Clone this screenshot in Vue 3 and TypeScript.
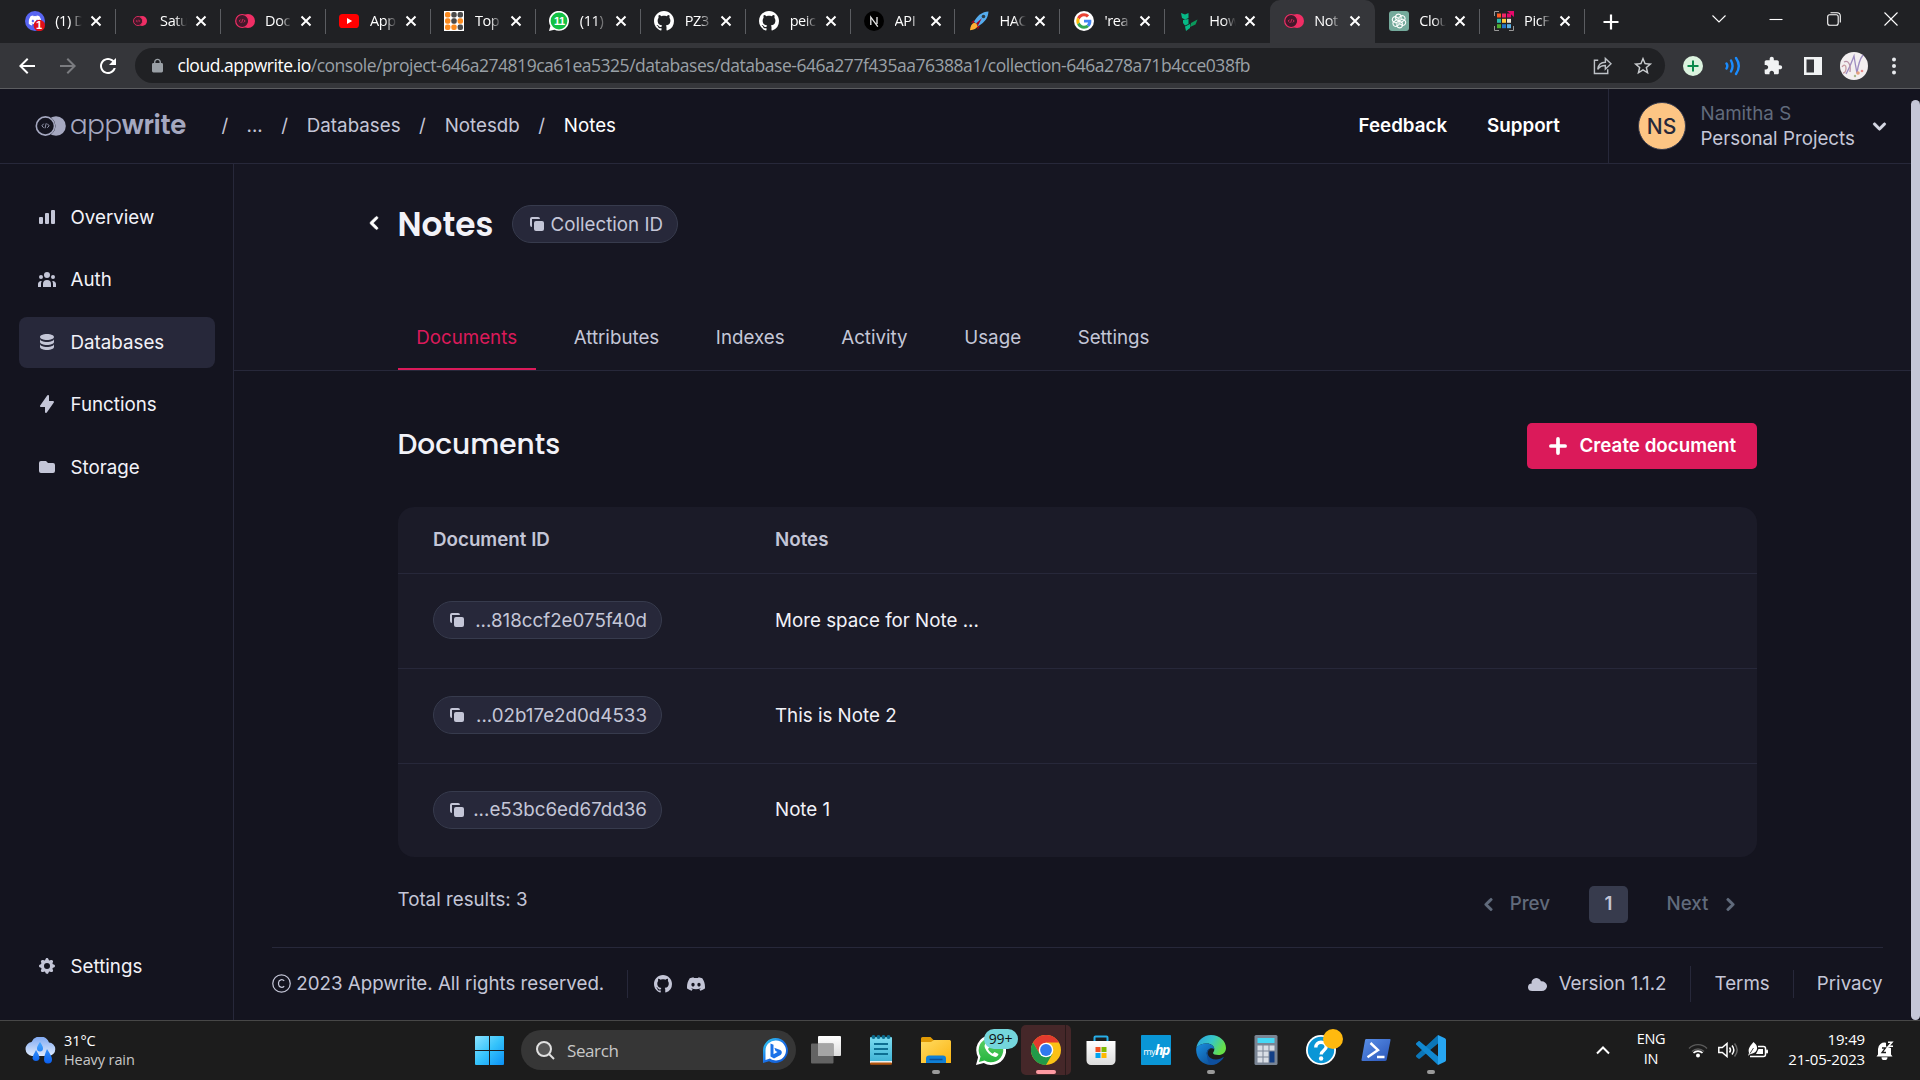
<script setup lang="ts">
interface BrowserTab {
  icon: string
  label: string
  active?: boolean
  mark?: string
}

const browserTabs: BrowserTab[] = [
  { icon: 'discord-badge', label: '(1) D', mark: '1' },
  { icon: 'aw-small', label: 'Satu' },
  { icon: 'aw', label: 'Doc' },
  { icon: 'youtube', label: 'App' },
  { icon: 'top', label: 'Top' },
  { icon: 'wa', label: '(11)', mark: '11' },
  { icon: 'github-tab', label: 'PZ3' },
  { icon: 'github-tab', label: 'peic' },
  { icon: 'next', label: 'API' },
  { icon: 'rocket', label: 'HAC' },
  { icon: 'google', label: "'rea" },
  { icon: 'green', label: 'How' },
  { icon: 'aw', label: 'Not', active: true },
  { icon: 'gpt', label: 'Clou' },
  { icon: 'pic', label: 'PicF' },
]

const navItems = [
  { icon: 'chart', label: 'Overview' },
  { icon: 'users', label: 'Auth' },
  { icon: 'db', label: 'Databases', active: true },
  { icon: 'bolt', label: 'Functions' },
  { icon: 'folder', label: 'Storage' },
]

const pageTabs = ['Documents', 'Attributes', 'Indexes', 'Activity', 'Usage', 'Settings']

const rows = [
  { id: '...818ccf2e075f40d', note: 'More space for Note ...' },
  { id: '...02b17e2d0d4533', note: 'This is Note 2' },
  { id: '...e53bc6ed67dd36', note: 'Note 1' },
]

const taskApps = [
  { icon: 'taskview' },
  { icon: 'notepad' },
  { icon: 'explorer', running: true },
  { icon: 'whatsapp', badge: '99+' },
  { icon: 'chrome', current: true },
  { icon: 'store' },
  { icon: 'myhp' },
  { icon: 'edge', running: true },
  { icon: 'calc' },
  { icon: 'help' },
  { icon: 'powershell' },
  { icon: 'vscode', running: true },
]

const crumbs = ['...', 'Databases', 'Notesdb', 'Notes']
</script>

<template>
  <div class="screen">
    <svg class="defs" width="0" height="0" aria-hidden="true">
      <defs>
        <linearGradient id="gWin" x1="0" y1="0" x2="1" y2="1">
          <stop offset="0" stop-color="#8be3ff" /><stop offset=".5" stop-color="#35c3fb" /><stop offset="1" stop-color="#0b90f5" />
        </linearGradient>
        <linearGradient id="gCloud" x1="0" y1="0" x2="0" y2="1">
          <stop offset="0" stop-color="#7fa9f2" /><stop offset="1" stop-color="#dfeafc" />
        </linearGradient>
        <linearGradient id="gDrop" x1="0" y1="0" x2="0" y2="1">
          <stop offset="0" stop-color="#45a7ff" /><stop offset="1" stop-color="#0a5ff0" />
        </linearGradient>
        <linearGradient id="gFolder" x1="0" y1="0" x2="1" y2="1">
          <stop offset="0" stop-color="#ffdb62" /><stop offset="1" stop-color="#fbb411" />
        </linearGradient>
        <linearGradient id="gPad" x1="0" y1="0" x2="0" y2="1">
          <stop offset="0" stop-color="#7cdcf0" /><stop offset="1" stop-color="#3fb4d6" />
        </linearGradient>
        <linearGradient id="gBing" x1="0" y1="0" x2="1" y2="1">
          <stop offset="0" stop-color="#35d6f2" /><stop offset=".5" stop-color="#1b72e8" /><stop offset="1" stop-color="#0d56c9" />
        </linearGradient>
        <linearGradient id="gEdgeTop" x1="0" y1="0" x2="1" y2=".4">
          <stop offset="0" stop-color="#2a9fe0" /><stop offset=".55" stop-color="#36c6c8" /><stop offset="1" stop-color="#66e048" />
        </linearGradient>
        <linearGradient id="gEdgeLow" x1="0" y1="0" x2="1" y2="1">
          <stop offset="0" stop-color="#1a8fe0" /><stop offset="1" stop-color="#0b3f86" />
        </linearGradient>
        <linearGradient id="gPs" x1="0" y1="0" x2="1" y2="1">
          <stop offset="0" stop-color="#5a90e8" /><stop offset="1" stop-color="#2a55b8" />
        </linearGradient>
        <linearGradient id="gWa" x1="0" y1="0" x2="0" y2="1">
          <stop offset="0" stop-color="#5bd066" /><stop offset="1" stop-color="#27b43e" />
        </linearGradient>
        <linearGradient id="gStore" x1="0" y1="0" x2="0" y2="1">
          <stop offset="0" stop-color="#ffffff" /><stop offset="1" stop-color="#dcdcdc" />
        </linearGradient>
      </defs>

      <symbol id="i-chart" viewBox="0 0 20 20"><path d="M2 11a1 1 0 011-1h2a1 1 0 011 1v5a1 1 0 01-1 1H3a1 1 0 01-1-1v-5zM8 7a1 1 0 011-1h2a1 1 0 011 1v9a1 1 0 01-1 1H9a1 1 0 01-1-1V7zM14 4a1 1 0 011-1h2a1 1 0 011 1v12a1 1 0 01-1 1h-2a1 1 0 01-1-1V4z" /></symbol>
      <symbol id="i-users" viewBox="0 0 20 20"><path d="M13 6a3 3 0 11-6 0 3 3 0 016 0zM18 8a2 2 0 11-4 0 2 2 0 014 0zM14 15a4 4 0 00-8 0v3h8v-3zM6 8a2 2 0 11-4 0 2 2 0 014 0zM16 18v-3a5.972 5.972 0 00-.75-2.906A3.005 3.005 0 0119 15v3h-3zM4.75 12.094A5.973 5.973 0 004 15v3H1v-3a3 3 0 013.75-2.906z" /></symbol>
      <symbol id="i-db" viewBox="0 0 20 20"><path d="M3 12v3c0 1.657 3.134 3 7 3s7-1.343 7-3v-3c0 1.657-3.134 3-7 3s-7-1.343-7-3zM3 7v3c0 1.657 3.134 3 7 3s7-1.343 7-3V7c0 1.657-3.134 3-7 3S3 8.657 3 7zM17 5c0 1.657-3.134 3-7 3S3 6.657 3 5s3.134-3 7-3 7 1.343 7 3z" /></symbol>
      <symbol id="i-bolt" viewBox="0 0 20 20"><path d="M11.3 1.046A1 1 0 0112 2v5h4a1 1 0 01.82 1.573l-7 10A1 1 0 018 18v-5H4a1 1 0 01-.82-1.573l7-10a1 1 0 011.12-.38z" /></symbol>
      <symbol id="i-folder" viewBox="0 0 20 20"><path d="M2 6a2 2 0 012-2h5l2 2h5a2 2 0 012 2v6a2 2 0 01-2 2H4a2 2 0 01-2-2V6z" /></symbol>
      <symbol id="i-gear" viewBox="0 0 20 20"><path fill-rule="evenodd" d="M11.49 3.17c-.38-1.56-2.6-1.56-2.98 0a1.532 1.532 0 01-2.286.948c-1.372-.836-2.942.734-2.106 2.106.54.886.061 2.042-.947 2.287-1.561.379-1.561 2.6 0 2.978a1.532 1.532 0 01.947 2.287c-.836 1.372.734 2.942 2.106 2.106a1.532 1.532 0 012.287.947c.379 1.561 2.6 1.561 2.978 0a1.533 1.533 0 012.287-.947c1.372.836 2.942-.734 2.106-2.106a1.533 1.533 0 01.947-2.287c1.561-.379 1.561-2.6 0-2.978a1.532 1.532 0 01-.947-2.287c.836-1.372-.734-2.942-2.106-2.106a1.532 1.532 0 01-2.287-.947zM10 13a3 3 0 100-6 3 3 0 000 6z" /></symbol>
      <symbol id="i-copy" viewBox="0 0 20 20"><path d="M7 9a2 2 0 012-2h6a2 2 0 012 2v6a2 2 0 01-2 2H9a2 2 0 01-2-2V9z" /><path d="M5 3a2 2 0 00-2 2v6a2 2 0 002 2V5h8a2 2 0 00-2-2H5z" /></symbol>
      <symbol id="i-left" viewBox="0 0 20 20"><path d="M12.707 5.293a1 1 0 010 1.414L9.414 10l3.293 3.293a1 1 0 01-1.414 1.414l-4-4a1 1 0 010-1.414l4-4a1 1 0 011.414 0z" stroke-width=".5" stroke="currentColor" /></symbol>
      <symbol id="i-github" viewBox="0 0 16 16"><path d="M8 0C3.58 0 0 3.58 0 8c0 3.54 2.29 6.53 5.47 7.59.4.07.55-.17.55-.38 0-.19-.01-.82-.01-1.49-2.01.37-2.53-.49-2.69-.94-.09-.23-.48-.94-.82-1.13-.28-.15-.68-.52-.01-.53.63-.01 1.08.58 1.23.82.72 1.21 1.87.87 2.33.66.07-.52.28-.87.51-1.07-1.78-.2-3.64-.89-3.64-3.95 0-.87.31-1.59.82-2.15-.08-.2-.36-1.02.08-2.12 0 0 .67-.21 2.2.82.64-.18 1.32-.27 2-.27s1.36.09 2 .27c1.53-1.04 2.2-.82 2.2-.82.44 1.1.16 1.92.08 2.12.51.56.82 1.27.82 2.15 0 3.07-1.87 3.75-3.65 3.95.29.25.54.73.54 1.48 0 1.07-.01 1.93-.01 2.2 0 .21.15.46.55.38A8.01 8.01 0 0 0 16 8c0-4.42-3.58-8-8-8z" /></symbol>
      <symbol id="i-discord" viewBox="0 0 16 16"><path d="M13.545 2.907a13.2 13.2 0 0 0-3.257-1.011.05.05 0 0 0-.052.025c-.141.25-.297.577-.406.833a12.2 12.2 0 0 0-3.658 0 8 8 0 0 0-.412-.833.05.05 0 0 0-.052-.025c-1.125.194-2.22.534-3.257 1.011a.04.04 0 0 0-.021.018C.356 6.024-.213 9.047.066 12.032q.003.022.021.037a13.3 13.3 0 0 0 3.995 2.02.05.05 0 0 0 .056-.019q.463-.63.818-1.329a.05.05 0 0 0-.01-.059l-.018-.011a9 9 0 0 1-1.248-.595.05.05 0 0 1-.02-.066l.015-.019q.127-.095.248-.195a.05.05 0 0 1 .051-.007c2.619 1.196 5.454 1.196 8.041 0a.05.05 0 0 1 .053.007q.121.1.248.195a.05.05 0 0 1-.004.085 8 8 0 0 1-1.249.594.05.05 0 0 0-.03.03.05.05 0 0 0 .003.041c.24.465.515.909.817 1.329a.05.05 0 0 0 .056.019 13.2 13.2 0 0 0 4.001-2.02.05.05 0 0 0 .021-.037c.334-3.451-.559-6.449-2.366-9.106a.03.03 0 0 0-.02-.019m-8.198 7.307c-.789 0-1.438-.724-1.438-1.612s.637-1.613 1.438-1.613c.807 0 1.45.73 1.438 1.613 0 .888-.637 1.612-1.438 1.612m5.316 0c-.788 0-1.438-.724-1.438-1.612s.637-1.613 1.438-1.613c.807 0 1.451.73 1.438 1.613 0 .888-.631 1.612-1.438 1.612" /></symbol>

      <symbol id="i-discord-badge" viewBox="0 0 20 20">
        <circle cx="10" cy="10" r="10" fill="#5865f2" />
        <use href="#i-discord" x="3.5" y="3" width="13" height="13" fill="#fff" />
        <circle cx="14.3" cy="14.5" r="5.7" fill="#e00f1a" />
      </symbol>
      <symbol id="i-aw" viewBox="0 0 20 20">
        <circle cx="13" cy="10" r="7" fill="#f02e65" />
        <circle cx="7.2" cy="10" r="6.5" fill="#42182a" stroke="#f02e65" stroke-width="1.2" />
        <path d="M5.6 8.6 4.2 10l1.4 1.4M8.8 8.6l1.4 1.4-1.4 1.4M7.7 8.2l-1 3.6" fill="none" stroke="#f02e65" stroke-width=".8" />
      </symbol>
      <symbol id="i-aw-small" viewBox="0 0 20 20"><use href="#i-aw" x="3" y="3" width="14" height="14" /></symbol>
      <symbol id="i-youtube" viewBox="0 0 20 20"><rect y="3" width="20" height="14" rx="3.6" fill="#f00" /><path d="M8 7v6l5.2-3z" fill="#fff" /></symbol>
      <symbol id="i-top" viewBox="0 0 20 20">
        <rect width="20" height="20" fill="#fff" />
        <g fill="#fb8a1e"><rect x="1" y="1" width="5.4" height="5.4" rx="2" /><rect x="1" y="7.3" width="5.4" height="5.4" rx="2" /><rect x="1" y="13.6" width="5.4" height="5.4" rx="2" /><rect x="13.6" y="7.3" width="5.4" height="5.4" rx="2" /><rect x="7.3" y="13.6" width="5.4" height="5.4" rx="2" /></g>
        <g fill="#4a4a4a"><rect x="7.3" y="1" width="5.4" height="5.4" rx="2" /><rect x="13.6" y="1" width="5.4" height="5.4" rx="2" /><rect x="7.3" y="7.3" width="5.4" height="5.4" rx="2" /><rect x="13.6" y="13.6" width="5.4" height="5.4" rx="2" /></g>
      </symbol>
      <symbol id="i-wa" viewBox="0 0 20 20">
        <path d="M0 20l1.4-5A10 10 0 1 1 5.3 18.7z" fill="#fff" /><circle cx="10" cy="10" r="8.4" fill="#12c143" />
      </symbol>
      <symbol id="i-github-tab" viewBox="0 0 20 20"><use href="#i-github" width="20" height="20" fill="#fff" /></symbol>
      <symbol id="i-next" viewBox="0 0 20 20"><circle cx="10" cy="10" r="10" fill="#000" /><path d="M6.8 14V6.2l7 9.4M13 6v7" fill="none" stroke="#e8e8e8" stroke-width="1.3" /></symbol>
      <symbol id="i-rocket" viewBox="0 0 20 20">
        <path d="M5 9 1.8 11.5 5.5 12zM11 15l-2.5 3.7L8 14.5z" fill="#a0041e" />
        <path d="M19.5.5C13 1 9 4 5 10.5l4.5 4.5C16 11 19 7 19.5.5z" fill="#55acee" />
        <path d="M7 12.5 13 7l-4 7.5z" fill="#a0041e" />
        <path d="M1 19.3c.3-4 1.7-7 4-7.6 2 .2 3.3 1.5 3.5 3.5-.8 2.3-3.5 3.7-7.5 4.1z" fill="#ffac33" />
        <circle cx="14.5" cy="5.5" r="1.8" fill="#2b3b47" />
      </symbol>
      <symbol id="i-google" viewBox="0 0 48 48">
        <circle cx="24" cy="24" r="24" fill="#fff" />
        <g transform="translate(5.5 5.5) scale(.77)">
          <path fill="#EA4335" d="M24 9.5c3.54 0 6.71 1.22 9.21 3.6l6.85-6.85C35.9 2.38 30.47 0 24 0 14.62 0 6.51 5.38 2.56 13.22l7.98 6.19C12.43 13.72 17.74 9.5 24 9.5z" />
          <path fill="#4285F4" d="M46.98 24.55c0-1.57-.15-3.09-.38-4.55H24v9.02h12.94c-.58 2.96-2.26 5.48-4.78 7.18l7.73 6c4.51-4.18 7.09-10.36 7.09-17.65z" />
          <path fill="#FBBC05" d="M10.53 28.59c-.48-1.45-.76-2.99-.76-4.59s.27-3.14.76-4.59l-7.98-6.19C.92 16.46 0 20.12 0 24c0 3.88.92 7.54 2.56 10.78l7.97-6.19z" />
          <path fill="#34A853" d="M24 48c6.48 0 11.93-2.13 15.89-5.81l-7.73-6c-2.15 1.45-4.92 2.3-8.16 2.3-6.26 0-11.57-4.22-13.47-9.91l-7.98 6.19C6.51 42.62 14.62 48 24 48z" />
        </g>
      </symbol>
      <symbol id="i-green" viewBox="0 0 20 20">
        <path d="M2 2l4 1.5 3.5-1.5v5L6 8.5 3 7zM4 9l5.5-1v5L6 14.5 4 12zM6 15.5l5-2.5v4L7 20z" fill="#06b886" />
        <path d="M12 12l6.5-3.5-2 5L11 16z" fill="#0a9a5c" />
      </symbol>
      <symbol id="i-gpt" viewBox="0 0 20 20">
        <rect width="20" height="20" rx="3" fill="#74aa9c" />
        <g fill="none" stroke="#fff" stroke-width="1.1">
          <path id="gptArm" d="M10 10V6.2l3-1.7a3 3 0 0 1 2.6 4.6L12.4 11" />
          <use href="#gptArm" transform="rotate(60 10 10)" /><use href="#gptArm" transform="rotate(120 10 10)" /><use href="#gptArm" transform="rotate(180 10 10)" /><use href="#gptArm" transform="rotate(240 10 10)" /><use href="#gptArm" transform="rotate(300 10 10)" />
        </g>
      </symbol>
      <symbol id="i-pic" viewBox="0 0 20 20">
        <path d="M.5 5V.5H5M.5 15v4.5H5M15 19.5h4.5V15" fill="none" stroke="#999" />
        <path d="M13 0h7v6z" fill="#e6096b" />
        <rect x="3" y="2.5" width="4" height="4" fill="#ff5a1f" /><rect x="8" y="2.5" width="4" height="4" fill="#f0256b" /><rect x="13" y="2.5" width="4" height="4" fill="#e6096b" />
        <rect x="3" y="7.8" width="4" height="4" fill="#2dbcae" /><rect x="8" y="7.8" width="4" height="4" fill="#ffc83d" /><rect x="13" y="7.8" width="4" height="4" fill="#e9e2d2" />
        <rect x="3" y="13.2" width="4" height="4" fill="#4caf2e" /><rect x="8" y="13.2" width="4" height="4" fill="#2475c9" /><rect x="13" y="13.2" width="4" height="4" fill="#5ab0e6" />
      </symbol>

      <symbol id="i-taskview" viewBox="0 0 30 30"><rect x="7" y="1" width="23" height="20" rx="1" fill="url(#gStore)" /><rect y="8.5" width="22.5" height="20" rx="1" fill="#6c6c6c" fill-opacity=".9" /><rect x="7" y="8.5" width="15.5" height="12.5" fill="#a5a5a5" /></symbol>
      <symbol id="i-notepad" viewBox="0 0 30 30">
        <rect x="4" y="2" width="22" height="25" rx="1" fill="url(#gPad)" /><rect x="4" y="26" width="22" height="2" fill="#eee" /><rect x="4" y="27.6" width="22" height="2.2" rx="1" fill="#b4560e" />
        <g fill="#0d6f92"><rect x="8" y="8" width="14" height="2" /><rect x="8" y="13" width="14" height="2" /><rect x="8" y="18" width="14" height="2" /><circle cx="7.5" cy="2" r="2" /><circle cx="12.5" cy="2" r="2" /><circle cx="17.5" cy="2" r="2" /><circle cx="22.5" cy="2" r="2" /></g>
      </symbol>
      <symbol id="i-explorer" viewBox="0 0 30 30"><path d="M0 3.5a1.5 1.5 0 0 1 1.5-1.5h8l3 3H29v8H0z" fill="#e09a05" /><path d="M0 7h10l3-2h15.5A1.5 1.5 0 0 1 30 6.5V28H0z" fill="url(#gFolder)" /><path d="M5 28v-4.5a3 3 0 0 1 3-3h14a3 3 0 0 1 3 3V28z" fill="#0f7fd6" /><path d="M8.5 24.5h13" stroke="#0a4f96" stroke-width="1.5" /></symbol>
      <symbol id="i-whatsapp" viewBox="0 0 30 30"><path d="M0 30l2.1-7.8A15 15 0 1 1 7.8 28z" fill="#fff" /><path d="M3 27l1.5-5.5A12.3 12.3 0 1 1 8.5 25.5z" fill="url(#gWa)" /><path d="M10 8c-1.5 1-1.8 3-1 5 1.8 4.5 5 7.5 9.5 8.8 2 .5 3.5-.8 4-2.8l-4-2-1.8 1.8c-2.2-1-3.7-2.5-4.7-4.7L13.5 12l-1.700-4z" fill="#fff" /></symbol>
      <symbol id="i-chrome" viewBox="0 0 30 30">
        <circle cx="15" cy="15" r="15" fill="#fbc116" />
        <path d="M2 7.5A15 15 0 0 1 28 7.5H15L8.5 18.75z" fill="#e33b2e" />
        <path d="M2 7.5A15 15 0 0 0 15 30l6.5-11.25h-13z" fill="#229a49" />
        <circle cx="15" cy="15" r="7.3" fill="#fff" /><circle cx="15" cy="15" r="5.9" fill="#3079ee" />
      </symbol>
      <symbol id="i-store" viewBox="0 0 30 30"><path d="M8.5 8V2.5A1 1 0 0 1 9.5 1.5h11a1 1 0 0 1 1 1V8" fill="none" stroke="#27aee8" stroke-width="2" /><path d="M.5 6h29v19.5a4.5 4.5 0 0 1-4.5 4.5H5a4.5 4.5 0 0 1-4.5-4.5z" fill="url(#gStore)" /><rect x="9.5" y="12" width="5" height="5" fill="#f25022" /><rect x="15.5" y="12" width="5" height="5" fill="#7fba00" /><rect x="9.5" y="18" width="5" height="5" fill="#00a4ef" /><rect x="15.5" y="18" width="5" height="5" fill="#ffb900" /></symbol>
      <symbol id="i-myhp" viewBox="0 0 30 30"><rect width="30" height="30" rx=".8" fill="#0a96d6" /></symbol>
      <symbol id="i-edge" viewBox="0 0 30 30">
        <path d="M.3 13C1.5 5.5 7.5 0 15 0c8.5 0 15 6 15 13 0 4.5-3.5 7-7.5 7-3.5 0-5.5-1-5.5-2 0-.8 1.3-1.3 1.3-3.8C18.3 11 15 8.5 11 8.5 6 8.5 2 10.5.3 13z" fill="url(#gEdgeTop)" />
        <path d="M.3 13C2 10 6 8.5 10.5 8.5c4.2 0 7.7 2.3 7.8 5.5-4-2-8 1-7.5 5 .5 5 6.5 8 14 5.3C22.5 28 19 30 15 30 6 30-.8 22.5.3 13z" fill="url(#gEdgeLow)" />
        <path d="M10.8 19c-.5-2.5 1-5 3.5-5.5C9 17 12 24.5 20 24.5c3 0 5.5-1.2 7-2.3.5-.3.8.2.5.6C24.5 27.5 20 30 15.5 30c-3-1.5-4.5-6-4.7-11z" fill="#0e4f9e" />
      </symbol>
      <symbol id="i-calc" viewBox="0 0 30 30"><rect x="3.5" width="23" height="30" rx="1.5" fill="#7a8594" /><rect x="6.5" y="3" width="17" height="5" fill="#45d8f5" /><g fill="#d9dee5"><rect x="6.5" y="10.5" width="5" height="5" /><rect x="12.5" y="10.5" width="5" height="5" /><rect x="18.5" y="10.5" width="5" height="5" /><rect x="6.5" y="16.5" width="5" height="5" /><rect x="12.5" y="16.5" width="5" height="5" /><rect x="6.5" y="22.5" width="5" height="5" /><rect x="12.5" y="22.5" width="5" height="5" /></g><rect x="18.5" y="16.5" width="5" height="11" fill="#123f86" /></symbol>
      <symbol id="i-help" viewBox="0 0 30 30"><circle cx="15" cy="15" r="15" fill="#fff" /><circle cx="15" cy="15" r="13.2" fill="#0a96d6" /><path d="M9.8 12.5c0-3.3 2.2-5.3 5.2-5.3s5.2 1.8 5.2 4.6c0 3.7-5 3.7-5 7.7" fill="none" stroke="#fff" stroke-width="3.4" /><circle cx="15.1" cy="23.5" r="2.2" fill="#fff" /></symbol>
      <symbol id="i-powershell" viewBox="0 0 30 30"><path d="M5.5 4h23c.8 0 1.200.5 1 1.200l-3.800 19.600c-.1.700-.7 1.200-1.500 1.200H1.500C.7 26 .3 25.500.5 24.800L4 5.200C4.200 4.500 4.700 4 5.500 4z" fill="url(#gPs)" /><path d="M9.500 8l7.500 7-10.500 7.200M16 22h7.500" fill="none" stroke="#fff" stroke-width="2.400" /></symbol>
      <symbol id="i-vscode" viewBox="0 0 30 30"><path d="M.3 20.200 22 0v8.500L4 23.600c-.6.500-1.300.5-1.800 0L.3 22c-.4-.5-.4-1.300 0-1.800z" fill="#0b76b8" /><path d="M.3 9.800c-.4-.5-.4-1.200 0-1.700L2.200 6.400c.6-.5 1.300-.5 1.800 0L22 21.500V30z" fill="#1188d0" /><path d="M22 0l7 3.200c.6.300 1 .9 1 1.500v20.600c0 .6-.4 1.200-1 1.500L22 30z" fill="#27a6f2" /></symbol>
    </svg>

    <!-- Browser tab strip -->
    <div class="tabstrip">
      <div v-for="(tab, i) in browserTabs" :key="i" class="btab" :class="{ active: tab.active, before: browserTabs[i + 1]?.active }">
        <svg class="fav"><use :href="'#i-' + tab.icon" /></svg>
        <span v-if="tab.mark" class="mark" :class="tab.icon">{{ tab.mark }}</span>
        <span class="btab-label">{{ tab.label }}</span>
        <svg class="close" viewBox="0 0 12 12"><path d="M1.5 1.5l9 9M10.5 1.5l-9 9" /></svg>
      </div>
      <svg class="newtab" viewBox="0 0 16 16"><path d="M8 .5v15M.5 8h15" /></svg>
      <div class="winctl">
        <svg viewBox="0 0 14 14"><path d="M.5 3.500 7 10l6.500-6.500" /></svg>
        <svg viewBox="0 0 14 14"><path d="M.5 7.500h13" /></svg>
        <svg viewBox="0 0 14 14"><rect x=".7" y="2.700" width="10.500" height="10.500" rx="2" /><path d="M3.500.7H10a3.300 3.300 0 0 1 3.300 3.300v6.500" /></svg>
        <svg viewBox="0 0 14 14"><path d="M.5.5l13 13M13.500.5l-13 13" /></svg>
      </div>
    </div>

    <!-- Browser toolbar -->
    <div class="toolbar">
      <svg class="tb" viewBox="0 0 24 24"><path d="M20 11H7.830l5.590-5.590L12 4l-8 8 8 8 1.410-1.410L7.830 13H20v-2z" /></svg>
      <svg class="tb dim" viewBox="0 0 24 24"><path transform="matrix(-1 0 0 1 24 0)" d="M20 11H7.830l5.590-5.590L12 4l-8 8 8 8 1.410-1.410L7.830 13H20v-2z" /></svg>
      <svg class="tb" viewBox="0 0 24 24"><path d="M17.650 6.350C16.200 4.900 14.210 4 12 4c-4.420 0-7.990 3.580-7.990 8s3.570 8 7.990 8c3.730 0 6.840-2.550 7.730-6h-2.080c-.82 2.330-3.040 4-5.650 4-3.310 0-6-2.690-6-6s2.690-6 6-6c1.660 0 3.140.69 4.220 1.780L13 11h7V4l-2.350 2.350z" /></svg>
      <div class="omnibox">
        <svg class="lock" viewBox="0 0 16 21"><path fill-rule="evenodd" d="M14 7h-1V5.500C13 2.500 10.800.5 8 .5S3 2.500 3 5.500V7H2a2 2 0 0 0-2 2v9.500a2 2 0 0 0 2 2h12a2 2 0 0 0 2-2V9a2 2 0 0 0-2-2zM5 5.500C5 3.700 6.300 2.500 8 2.500s3 1.200 3 3V7H5z" /></svg>
        <span class="url"><b>cloud.appwrite.io</b>/console/project-646a274819ca61ea5325/databases/database-646a277f435aa76388a1/collection-646a278a71b4cce038fb</span>
        <svg class="share" viewBox="0 0 20 20"><path d="M5.500 4.500H1.500v14h14v-4.500M5 14c.5-5 3.500-7.500 8-7.500V2.500l6 5.700-6 5.700V10c-3.800 0-6.200 1.200-8 4z" /></svg>
        <svg class="star" viewBox="0 0 24 24"><path d="M22 9.240l-7.190-.62L12 2 9.190 8.630 2 9.240l5.460 4.730L5.820 21 12 17.270 18.180 21l-1.630-7.030L22 9.240zM12 15.400l-3.760 2.270 1-4.280-3.320-2.880 4.380-.38L12 6.100l1.710 4.040 4.380.38-3.320 2.880 1 4.280L12 15.400z" /></svg>
      </div>
      <div class="exts">
        <svg viewBox="0 0 20 20"><circle cx="10" cy="10" r="10" fill="#dcf3df" /><path d="M10 4.500v11M4.500 10h11" stroke="#0b8a4b" stroke-width="2" /></svg>
        <svg viewBox="0 0 20 20" fill="none" stroke="#1a8cff" stroke-width="2.400" stroke-linecap="round"><path d="M3.500 7.500c1 1.500 1 3.500 0 5M8 4.500c2 3.500 2 7.500 0 11M13 2c3.500 5 3.500 11 0 16" /></svg>
        <svg viewBox="0 0 24 24"><path fill="#f1f3f4" d="M20.500 11H19V7c0-1.100-.9-2-2-2h-4V3.500C13 2.120 11.880 1 10.500 1S8 2.120 8 3.500V5H4c-1.100 0-1.990.9-1.990 2v3.800H3.500c1.490 0 2.700 1.210 2.700 2.700s-1.210 2.700-2.700 2.700H2V20c0 1.100.9 2 2 2h3.800v-1.500c0-1.490 1.210-2.700 2.700-2.700 1.490 0 2.700 1.210 2.700 2.700V22H17c1.100 0 2-.9 2-2v-4h1.500c1.380 0 2.500-1.120 2.500-2.500S21.880 11 20.500 11z" /></svg>
        <svg viewBox="0 0 20 20"><path fill="#f1f3f4" fill-rule="evenodd" d="M1 1h18v18H1zM3.500 3.500v13h7.500v-13z" /></svg>
        <svg class="me" viewBox="0 0 28 28"><circle cx="14" cy="14" r="14" fill="#f3eff0" /><g fill="none" stroke-width="1.300"><path d="M2 15c2-3 4-2 4 1s-1 5-3 5" stroke="#c79aa0" /><path d="M6 22C10 15 12 9 14 4c1 7 2 12 3 17 1-7 2-13 6-18" stroke="#9c8bc0" /><path d="M4 10c4-2 7 2 6 10" stroke="#b890a5" /></g><circle cx="18" cy="21" r="1.800" fill="#e5a07c" /><circle cx="22" cy="19" r="1.300" fill="#e88d8d" /><circle cx="15" cy="24" r="1.200" fill="#a9b98a" /></svg>
        <svg class="kebab" viewBox="0 0 20 20" fill="#e8eaed"><circle cx="10" cy="3.500" r="2" /><circle cx="10" cy="10" r="2" /><circle cx="10" cy="16.500" r="2" /></svg>
      </div>
    </div>

    <!-- Console -->
    <div class="app">
      <div class="console">
        <header class="header">
          <div class="logo">
            <svg viewBox="0 0 31 22"><circle cx="21" cy="11" r="9.800" fill="#a5a8c0" /><circle cx="10.700" cy="11" r="9.800" fill="#14141f" /><circle cx="10.400" cy="11" r="9.100" fill="none" stroke="#a5a8c0" stroke-width="1.600" /><path d="M8.700 8.700 6.900 10.800l1.800 2M12.300 8.700l1.800 2.100-1.800 2M11.200 8.300l-1.200 5" fill="none" stroke="#a5a8c0" stroke-width=".9" /></svg>
            <span class="word"><i>app</i><b>write</b></span>
          </div>
          <nav class="crumbs">
            <template v-for="(c, i) in crumbs" :key="c">
              <span class="sep">/</span>
              <span :class="['crumb', 'c' + i]">{{ c }}</span>
            </template>
          </nav>
          <div class="links"><span>Feedback</span><span>Support</span></div>
          <div class="user">
            <span class="avatar">NS</span>
            <div class="who"><span class="name">Namitha S</span><span class="team">Personal Projects</span></div>
            <svg class="down"><use href="#i-left" /></svg>
          </div>
        </header>
        <div class="body">
          <aside class="side">
            <div class="nav">
              <a v-for="n in navItems" :key="n.label" class="nav-item" :class="{ on: n.active }">
                <svg><use :href="'#i-' + n.icon" /></svg><span>{{ n.label }}</span>
              </a>
            </div>
            <a class="nav-item"><svg><use href="#i-gear" /></svg><span>Settings</span></a>
          </aside>
          <main class="main">
            <section class="cover">
              <div class="title-row">
                <svg class="back"><use href="#i-left" /></svg>
                <h1>Notes</h1>
                <span class="pill id-pill"><svg><use href="#i-copy" /></svg><span>Collection ID</span></span>
              </div>
              <nav class="tabs">
                <span v-for="(t, i) in pageTabs" :key="t" class="tab" :class="{ on: i === 0 }">{{ t }}</span>
              </nav>
            </section>
            <section class="content">
              <div class="head">
                <h2>Documents</h2>
                <button class="create"><svg viewBox="0 0 18 18"><path d="M9 1.900v14.200M1.900 9h14.200" /></svg><span>Create document</span></button>
              </div>
              <div class="table">
                <div class="tr th"><span class="td first">Document ID</span><span class="td">Notes</span></div>
                <div v-for="r in rows" :key="r.id" class="tr">
                  <span class="td first"><span class="pill"><svg><use href="#i-copy" /></svg><span>{{ r.id }}</span></span></span>
                  <span class="td">{{ r.note }}</span>
                </div>
              </div>
              <div class="pager">
                <span class="total">Total results: 3</span>
                <div class="pages">
                  <span class="pg prev"><svg><use href="#i-left" /></svg><span>Prev</span></span>
                  <span class="num">1</span>
                  <span class="pg next"><span>Next</span><svg class="flip"><use href="#i-left" /></svg></span>
                </div>
              </div>
            </section>
            <footer class="footer">
              <svg class="copyright" viewBox="0 0 20 20"><circle cx="10" cy="10" r="9.200" /><path d="M12.800 7.300a3.300 3.300 0 0 0-5.900 1.600v2.200a3.300 3.300 0 0 0 5.900 1.600" /></svg>
              <span class="rights">2023 Appwrite. All rights reserved.</span>
              <i class="bar b1"></i>
              <svg class="social gh"><use href="#i-github" /></svg>
              <svg class="social dc"><use href="#i-discord" /></svg>
              <svg class="cloud" viewBox="2 3 16 13" preserveAspectRatio="none"><path d="M5.500 16a3.500 3.500 0 01-.369-6.980 4 4 0 117.753-1.977A4.500 4.500 0 1113.500 16h-8z" /></svg>
              <span class="version">Version 1.1.2</span>
              <i class="bar tall"></i>
              <span class="terms">Terms</span>
              <i class="bar b3"></i>
              <span class="privacy">Privacy</span>
            </footer>
          </main>
        </div>
      </div>
      <div class="scroll"><i></i></div>
    </div>

    <!-- Windows taskbar -->
    <div class="taskbar">
      <div class="weather">
        <svg viewBox="0 0 31 30"><path d="M7 19a7 7 0 0 1-.5-13.900A9.500 9.500 0 0 1 24 5.500 6.800 6.800 0 0 1 24.500 19z" fill="url(#gCloud)" /><path d="M15 5c2 3 3 4.500 3 6.500a3 3 0 0 1-6 0C12 9.500 13 8 15 5zM11 13c2.500 4 3.500 6 3.500 8.500a3.700 3.700 0 0 1-7 0C7.500 19 9 17 11 13zM22 12c3 5 5 7.500 5 10.500a4 4 0 0 1-8 0c0-3 1-5.500 3-10.500z" fill="url(#gDrop)" /></svg>
        <div><span>31°C</span><span class="rain">Heavy rain</span></div>
      </div>
      <svg class="win" viewBox="0 0 29 29"><path d="M1 0h13v14H0V1a1 1 0 0 1 1-1zM15 0h13a1 1 0 0 1 1 1v13H15zM0 15h14v14H1a1 1 0 0 1-1-1zM15 15h14v13a1 1 0 0 1-1 1H15z" fill="url(#gWin)" /></svg>
      <div class="search">
        <svg class="mag" viewBox="0 0 19 19"><circle cx="8" cy="8" r="7" fill="#555" /><path d="M13 13l5 5" /></svg>
        <span>Search</span>
        <svg class="bing" viewBox="0 0 25 25"><path d="M12.500 0A12.500 12.500 0 1 1 6 23.200L0 25V12.500A12.500 12.500 0 0 1 12.500 0z" fill="url(#gBing)" /><path d="M13 2.500a10 10 0 1 1-6 18L2.500 22V12.500a10 10 0 0 1 10.500-10z" fill="#fff" /><path d="M7.500 5.500l3 1.200v9.500l4-2.200-2-1-1.200-3.200 6 2.300c2 1 2 3.500.3 5l-6.600 3.500-3.500-2.200z" fill="#1b72e8" /></svg>
      </div>
      <div class="apps">
        <div v-for="a in taskApps" :key="a.icon" class="app-cell" :class="{ current: a.current }">
          <svg class="app-icon"><use :href="'#i-' + a.icon" /></svg>
          <i v-if="a.running || a.current" class="dot"></i>
          <span v-if="a.badge" class="badge">{{ a.badge }}</span>
          <span v-if="a.icon === 'myhp'" class="hp">my<b>hp</b></span>
          <i v-if="a.icon === 'help'" class="alert"></i>
        </div>
      </div>
      <div class="tray">
        <svg class="up" viewBox="0 0 14 9"><path d="M1 7.500 7 1.500l6 6" /></svg>
        <div class="lang"><span>ENG</span><span>IN</span></div>
        <svg class="wifi" viewBox="0 0 20 16"><path d="M1 6.500a12.500 12.500 0 0 1 18 0" stroke="#5a5a5a" /><path d="M4 9.500a8.500 8.500 0 0 1 12 0" stroke="#5a5a5a" /><path d="M5.500 11a6.500 6.500 0 0 1 9 0" stroke="#fff" stroke-width="1.700" /><circle cx="10" cy="13.500" r="2" fill="#fff" stroke="none" /></svg>
        <svg class="vol" viewBox="0 0 20 16"><path d="M.8 5.500h3.500L9 1.500v13l-4.700-4H.8z" stroke="#fff" stroke-width="1.500" /><path d="M11.500 5.500c1.200 1.500 1.200 3.500 0 5M14 3.500c2.200 2.700 2.200 6.300 0 9" stroke="#fff" stroke-width="1.500" /><path d="M16.500 1.500c3.300 4 3.300 9 0 13" stroke="#666" stroke-width="1.500" /></svg>
        <svg class="bat" viewBox="0 0 20 17"><path d="M10 4.500h5.500a2 2 0 0 1 2 2v6a2 2 0 0 1-2 2H2" fill="none" stroke="#fff" stroke-width="1.500" /><rect x="18" y="7.500" width="2" height="4" rx="1" fill="#fff" /><path d="M10.500 7h4.500v5H8z" fill="#fff" /><path d="M5.500 0c3 2.500 4.500 5 3 8.500-1 2.500-4 3-7 4L0 14l1-3C-.5 6 3 3.500 5.500 0z" fill="#fff" /><path d="M2 11.500 5.500 6" stroke="#1c1c1c" stroke-width=".8" /></svg>
        <div class="clock"><span>19:49</span><span class="date">21-05-2023</span></div>
        <svg class="bell" viewBox="0 0 18 19"><path d="M2 13.500V8a6.500 6.500 0 0 1 8-6.300V5.500l5 1.500v6.500l1.500 2H.5z" fill="#fff" /><path d="M5.500 16.300h6a3 3 0 0 1-6 0z" fill="#fff" /><path d="M6 7h3.500L6 11.500h4" fill="none" stroke="#1c1c1c" stroke-width="1.300" /><path d="M12 1.200h4l-3.500 4H17" fill="none" stroke="#fff" stroke-width="1.500" /></svg>
      </div>
    </div>
  </div>
</template>

<style>
html,
body {
  margin: 0;
  background: #14141f;
  overflow: hidden;
}
</style>

<style scoped>
* {
  box-sizing: border-box;
}
.screen {
  width: 1920px;
  height: 1080px;
  display: flex;
  flex-direction: column;
  overflow: hidden;
  font-family: 'Open Sans', 'Noto Sans', sans-serif;
  color: #fff;
  white-space: nowrap;
}
.defs {
  position: absolute;
}
svg {
  flex: none;
  display: block;
}
i {
  font-style: normal;
}

/* Tab strip */
.tabstrip {
  height: 43px;
  flex: none;
  display: flex;
  align-items: stretch;
  background: #202124;
  padding-left: 11.2px;
}
.btab {
  width: 104.93px;
  flex: none;
  display: flex;
  align-items: center;
  padding: 0 0 1px 13.5px;
  position: relative;
}
.btab::after {
  content: '';
  width: 1px;
  height: 25px;
  background: #5b5d61;
  position: absolute;
  right: 0;
  top: 9px;
}
.btab.active {
  background: #35363a;
  border-radius: 10px 10px 0 0;
}
.btab.active::after,
.btab.before::after {
  display: none;
}
.fav {
  width: 20px;
  height: 20px;
}
.mark {
  position: absolute;
  left: 13.5px;
  top: 11px;
  width: 20px;
  font: 700 11px/20px 'Liberation Sans', sans-serif;
  text-align: center;
  letter-spacing: -0.5px;
}
.mark.discord-badge {
  left: 17.5px;
  top: 15px;
}
.btab-label {
  width: 27px;
  margin-left: 10.5px;
  font-size: 14.5px;
  line-height: 20px;
  letter-spacing: -0.4px;
  overflow: hidden;
  -webkit-mask-image: linear-gradient(90deg, #000 55%, transparent);
  mask-image: linear-gradient(90deg, #000 55%, transparent);
}
.close {
  width: 12px;
  height: 12px;
  margin-left: 8px;
  fill: none;
  stroke: #fff;
  stroke-width: 2;
}
.newtab {
  width: 16px;
  height: 16px;
  align-self: center;
  margin-left: 17.5px;
  stroke: #fff;
  stroke-width: 2.2;
}
.winctl {
  margin-left: auto;
  display: flex;
  gap: 43.3px;
  padding: 12px 22px 0 0;
}
.winctl svg {
  width: 14px;
  height: 14px;
  fill: none;
  stroke: #fff;
  stroke-width: 1.1;
}

/* Toolbar */
.toolbar {
  height: 46px;
  flex: none;
  display: flex;
  align-items: center;
  background: #35363a;
  border-bottom: 1px solid #5c5d60;
  padding-left: 15px;
}
.tb {
  width: 24px;
  height: 24px;
  margin-right: 16.5px;
  fill: #fff;
}
.tb.dim {
  fill: #7b7c80;
}
.omnibox {
  width: 1530px;
  height: 35px;
  margin-left: -1.5px;
  border-radius: 18px;
  background: #202124;
  display: flex;
  align-items: center;
  padding: 0 11.5px 0 17px;
}
.lock {
  width: 11px;
  height: 15px;
  fill: #9aa0a6;
}
.url {
  margin-left: 14.5px;
  margin-top: -1px;
  flex: 1;
  font-size: 17.5px;
  line-height: 24px;
  letter-spacing: -0.473px;
  color: #9aa0a6;
}
.url b {
  font-weight: 400;
  color: #fff;
}
.share {
  width: 19px;
  height: 19px;
  margin-right: 20px;
  fill: none;
  stroke: #bdc1c6;
  stroke-width: 1.5;
}
.star {
  width: 22px;
  height: 22px;
  fill: #c9cccf;
}
.exts {
  display: flex;
  align-items: center;
  margin-left: 17.5px;
  gap: 20px;
}
.exts svg {
  width: 20px;
  height: 20px;
}
.exts .me {
  width: 28px;
  height: 28px;
  margin: 0 -4px 0 -3px;
}

/* Console shell */
.app {
  flex: 1;
  min-height: 0;
  display: flex;
  background: #14141f;
  font-family: Inter, 'Noto Sans', sans-serif;
  font-size: 18.75px;
  color: #c4c6d7;
}
.console {
  width: 1911px;
  display: flex;
  flex-direction: column;
}
.scroll {
  width: 9px;
  padding-top: 11px;
  display: flex;
}
.scroll i {
  width: 9px;
  border-radius: 5px;
  background: #c4c6d7;
}
.header {
  height: 75px;
  flex: none;
  display: flex;
  align-items: center;
  border-bottom: 1px solid #27283a;
  padding-left: 34.5px;
}
.logo {
  display: flex;
  align-items: center;
  width: 187px;
}
.logo svg {
  width: 31px;
  height: 22px;
}
.word {
  margin-left: 4.5px;
  font-family: Poppins, Inter, sans-serif;
  font-size: 26px;
  line-height: 30px;
  color: #a5a8c0;
  margin-top: -3px;
  letter-spacing: -0.3px;
}
.word i {
  font-weight: 300;
}
.word b {
  font-weight: 600;
}
.crumbs {
  display: flex;
  margin-top: -1px;
}
.crumb {
  margin: 0 18.55px;
}
.crumb.c0 {
  margin-left: 18px;
}
.crumb.c3 {
  color: #fff;
}
.sep {
  width: 7px;
}
.links {
  margin-left: auto;
  margin-top: -1px;
  display: flex;
  gap: 40px;
  margin-right: 48px;
  font-weight: 600;
  color: #fff;
}
.user {
  width: 303px;
  height: 74px;
  border-left: 1px solid #27283a;
  display: flex;
  align-items: center;
  padding-left: 28.5px;
}
.avatar {
  width: 48px;
  height: 48px;
  border-radius: 50%;
  background: #fdc584;
  border: 1px solid #373b4d;
  color: #27283a;
  font-size: 21px;
  font-weight: 500;
  display: flex;
  align-items: center;
  justify-content: center;
}
.who {
  display: flex;
  flex-direction: column;
  margin-left: 15px;
  line-height: 25px;
  width: 166px;
}
.name {
  color: #616b7c;
}
.down {
  width: 25px;
  height: 25px;
  fill: #d6d8e4;
  color: #d6d8e4;
  transform: rotate(-90deg);
}
.body {
  flex: 1;
  display: flex;
}
.side {
  width: 234px;
  border-right: 1px solid #27283a;
  padding: 27.5px 18px 28px 19px;
  display: flex;
  flex-direction: column;
  justify-content: space-between;
}
.nav {
  display: flex;
  flex-direction: column;
  gap: 11.5px;
}
.nav-item {
  height: 51px;
  border-radius: 8px;
  display: flex;
  align-items: center;
  padding-left: 18px;
  color: #f2f2f8;
}
.nav-item.on {
  background: #27283a;
}
.nav-item svg {
  width: 20px;
  height: 20px;
  margin-right: 13.5px;
  fill: #c4c6d7;
  margin-top: -1px;
}
.main {
  flex: 1;
  display: flex;
  flex-direction: column;
}
.cover {
  height: 207px;
  flex: none;
  display: flex;
  flex-direction: column;
  background: #161622;
  border-bottom: 1px solid #27283a;
  padding: 38px 0 0 127px;
}
.title-row {
  display: flex;
  align-items: center;
  height: 44px;
}
.back {
  width: 26px;
  height: 26px;
  fill: #fff;
  color: #fff;
  margin-top: -2px;
}
h1,
h2 {
  margin: 0;
  font-family: Poppins, Inter, sans-serif;
  color: #f2f2f8;
}
h1 {
  margin-left: 10.5px;
  padding-top: 2px;
  font-size: 32.8px;
  font-weight: 600;
  width: 114.5px;
}
.pill {
  height: 38px;
  display: inline-flex;
  align-items: center;
  border: 1px solid #373b4d;
  border-radius: 20px;
  background: #27283a;
  padding: 0 14px 0 13px;
  color: #c4c6d7;
  font-weight: 400;
}
.pill svg {
  width: 20px;
  height: 20px;
  fill: #c4c6d7;
}
.id-pill {
  width: 166px;
  padding-left: 14px;
}
.id-pill span {
  margin-left: 3.5px;
}
.tabs {
  margin-top: auto;
  padding-left: 37px;
  display: flex;
  gap: 19.1px;
  height: 66px;
}
.tab {
  padding: 21px 18.75px 0;
  line-height: 26px;
  color: #c4c6d7;
}
.tab.on {
  color: #db1a5a;
  padding-left: 18.2px;
  border-bottom: 2px solid #db1a5a;
}
.content {
  padding: 52px 154px 0 164px;
}
.head {
  display: flex;
  justify-content: space-between;
  height: 84px;
}
h2 {
  font-size: 28px;
  font-weight: 500;
  line-height: 44px;
  margin-left: -0.5px;
}
.create {
  width: 230px;
  height: 46px;
  border: 0;
  border-radius: 5px;
  background: #db1a5a;
  color: #fff;
  font: 600 18.75px Inter, sans-serif;
  display: flex;
  align-items: center;
  padding: 0 0 1px 22px;
}
.create svg {
  width: 18px;
  height: 18px;
  stroke: #fff;
  stroke-width: 3.7;
  stroke-linecap: round;
}
.create span {
  margin-left: 12.5px;
}
.table {
  height: 350px;
  border-radius: 16px;
  background: #1b1b28;
  overflow: hidden;
}
.tr {
  height: 95px;
  display: flex;
  border-bottom: 1px solid #27283a;
  color: #f2f2f8;
}
.tr:last-child {
  border-bottom: 0;
  height: 93px;
}
.tr.th {
  height: 67px;
  color: #c4c6d7;
  font-weight: 600;
}
.td {
  flex: 1;
  display: flex;
  align-items: center;
  padding: 0 0 1.5px 35px;
}
.td.first {
  flex: none;
  width: 342px;
}
.td .pill {
  width: 229px;
  justify-content: space-between;
}
.pager {
  height: 90px;
  display: flex;
  justify-content: space-between;
}
.total {
  padding-top: 31px;
  margin-left: -0.5px;
  line-height: 24px;
}
.pages {
  display: flex;
  align-items: center;
  height: 37px;
  margin-top: 29px;
  font-weight: 500;
  color: #616b7c;
}
.pg {
  display: flex;
  align-items: center;
}
.pg > span {
  padding-bottom: 1.5px;
}
.pg svg {
  width: 25px;
  height: 25px;
  fill: #616b7c;
}
.prev span {
  margin: 0 39px 0 9px;
}
.num {
  width: 39px;
  height: 37px;
  border-radius: 5px;
  background: #373b4d;
  color: #c4c6d7;
  font-weight: 600;
  display: flex;
  align-items: center;
  justify-content: center;
  padding-bottom: 1.5px;
}
.next span {
  margin: 0 9.5px 0 38.5px;
}
.next {
  margin-right: 14px;
}
.flip {
  transform: scaleX(-1);
}
.footer {
  margin: 0 28.5px 0 38px;
  height: 73px;
  flex: none;
  border-top: 1px solid #27283a;
  display: flex;
  align-items: center;
  padding-bottom: 1px;
}
.copyright {
  width: 19px;
  height: 19px;
  fill: none;
  stroke: #c4c6d7;
  stroke-width: 1.3;
}
.rights {
  margin-left: 5.3px;
  letter-spacing: -0.02px;
}
.bar {
  width: 1px;
  height: 28px;
  background: #27283a;
}
.b1 {
  margin: 0 24px 0 23px;
}
.b3 {
  margin: 0 23px 0 23px;
}
.bar.tall {
  height: 36px;
  margin: 0 24px 0 23px;
}
.social {
  width: 18px;
  height: 18px;
  fill: #c4c6d7;
}
.gh {
  margin-left: 1.5px;
}
.dc {
  margin-left: 15px;
}
.cloud {
  width: 19px;
  height: 14px;
  fill: #c4c6d7;
  margin-left: auto;
}
.version {
  margin-left: 11.5px;
}

/* Taskbar */
.taskbar {
  height: 60px;
  flex: none;
  display: flex;
  align-items: center;
  background: #1c1c1c;
  border-top: 1px solid #474747;
  font-size: 14.5px;
}
.weather {
  display: flex;
  width: 475px;
  padding-left: 25px;
}
.weather svg {
  width: 31px;
  height: 30px;
  margin-top: 5px;
}
.weather div {
  display: flex;
  flex-direction: column;
  margin: -1px 0 0 8px;
  line-height: 19.5px;
  letter-spacing: -0.1px;
}
.rain {
  color: #c8c8c8;
}
.win {
  width: 29px;
  height: 29px;
}
.search {
  width: 275px;
  height: 40px;
  margin-left: 17px;
  margin-top: -1px;
  border-radius: 20px;
  background: #363636;
  display: flex;
  align-items: center;
  padding: 0 8px 0 15px;
  font-size: 17px;
  color: #c8c8c8;
}
.search span {
  margin-left: 12px;
  letter-spacing: -0.4px;
  flex: 1;
}
.mag {
  width: 19px;
  height: 19px;
  stroke: #e0e0e0;
  stroke-width: 2;
}
.bing {
  width: 25px;
  height: 25px;
}
.apps {
  display: flex;
  margin-left: 2.5px;
  margin-top: -1px;
  height: 50px;
}
.app-cell {
  width: 55px;
  display: flex;
  align-items: center;
  justify-content: center;
  position: relative;
}
.app-cell.current::before {
  content: '';
  position: absolute;
  left: 2px;
  top: 0;
  width: 50px;
  height: 50px;
  border-radius: 5px;
  background: linear-gradient(90deg, #452729 44px, #2a1a1b 44px 45px, #452729 45px);
}
.app-icon {
  width: 30px;
  height: 30px;
  position: relative;
}
.dot {
  position: absolute;
  left: 23.5px;
  bottom: 1px;
  width: 8px;
  height: 4px;
  border-radius: 2px;
  background: #9a9a9a;
}
.current .dot {
  left: 17.5px;
  width: 20px;
  background: #ff9aa2;
}
.badge {
  position: absolute;
  left: 20px;
  top: 4px;
  width: 34px;
  height: 20px;
  border-radius: 10px;
  background: #74d6dc;
  color: #111;
  font-size: 14px;
  line-height: 19px;
  text-align: center;
  letter-spacing: -0.2px;
}
.hp {
  position: absolute;
  left: 12.5px;
  top: 10px;
  width: 30px;
  text-align: center;
  font-size: 9px;
  line-height: 30px;
  letter-spacing: -0.5px;
}
.hp b {
  font-size: 14px;
  font-style: italic;
  letter-spacing: -1.5px;
}
.alert {
  position: absolute;
  left: 29px;
  top: 4px;
  width: 20px;
  height: 20px;
  border-radius: 50%;
  background: #ffb90f;
}
.tray {
  margin-left: auto;
  margin-top: -1px;
  display: flex;
  align-items: center;
  padding-right: 26px;
}
.tray svg {
  fill: none;
}
.tray .up {
  width: 14px;
  height: 9px;
  stroke: #fff;
  stroke-width: 2;
  margin-right: 26px;
}
.lang,
.clock {
  display: flex;
  flex-direction: column;
  align-items: center;
  line-height: 20px;
  letter-spacing: -0.3px;
  margin-top: -2px;
}
.lang {
  width: 30px;
  margin-right: 22px;
}
.wifi {
  width: 20px;
  height: 16px;
  stroke-width: 1.4;
  margin-right: 10px;
}
.vol {
  width: 20px;
  height: 16px;
  margin-right: 10px;
}
.bat {
  width: 20px;
  height: 17px;
}
.clock {
  width: 97px;
  align-items: flex-end;
  margin-right: 11px;
  font-size: 15px;
  letter-spacing: -0.15px;
}
.bell {
  width: 18px;
  height: 19px;
}
</style>
